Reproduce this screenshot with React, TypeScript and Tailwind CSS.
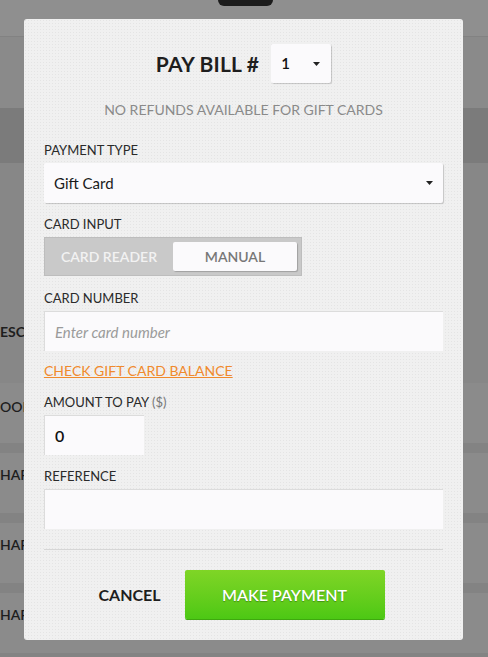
import { useState } from 'react';

const font = { fontFamily: '"Source Sans Pro", Lato, "Open Sans", sans-serif' };

// Dimmed page behind the modal
const Backdrop = () => (
  <div className="w-full h-[657px] flex flex-col bg-[#878787] text-[#1e1e1e] font-semibold text-[14px]">
    <div className="h-[37px] bg-[#8f8f8f] border-b border-[#828282] flex justify-center">
      <div className="w-[55px] h-[6px] bg-[#1c1c1c] rounded-b-[6px] ml-[3px]" />
    </div>
    <div className="h-[71px] bg-[#8a8a8a]" />
    <div className="h-[55px] bg-[#7b7b7b]" />
    <div className="h-[220px] bg-[#878787] flex items-end pb-[41px]">
      <span className="font-bold">ESC</span>
    </div>
    <div className="h-[60px] bg-[#8b8b8b] flex items-center pb-[14px]">
      <span>OOM</span>
    </div>
    {[0, 1, 2].map((i) => (
      <div key={i} className="flex flex-col">
        <div className="h-[10px] bg-[#838383]" />
        <div className="h-[60px] bg-[#8b8b8b] flex items-center pb-[18px]">
          <span>HAR</span>
        </div>
      </div>
    ))}
    <div className="flex-1 bg-[#838383]" />
  </div>
);

const Label = ({ children, className = '' }: { children: React.ReactNode; className?: string }) => (
  <div className={`text-[13px] leading-[18px] text-[#2a2a2a] ${className}`}>{children}</div>
);

const Caret = () => (
  <svg width="7" height="4" viewBox="0 0 7 4" className="fill-[#222]">
    <path d="M0 0h7L3.5 4z" />
  </svg>
);

export default function App() {
  const [mode, setMode] = useState<'reader' | 'manual'>('manual');

  return (
    <div className="relative w-full h-[657px] overflow-hidden" style={font}>
      <Backdrop />

      {/* Modal */}
      <div className="absolute left-[24px] top-[19px] w-[439px] h-[621px] rounded-[3px] bg-[#f0f0f0] bg-[radial-gradient(#e4e4e4_0.6px,transparent_0.7px)] bg-[length:3px_3px] px-5 pt-[25px] flex flex-col">
        {/* Title */}
        <div className="flex items-center justify-center gap-3">
          <h1 className="text-[21px] font-bold text-[#1e1e1e] tracking-[0.2px]">PAY BILL #</h1>
          <div className="w-[60px] h-[39px] bg-[#fbfafc] rounded-[2px] shadow-[1px_1px_1px_rgba(0,0,0,0.18)] flex items-center justify-between pl-[10px] pr-[11px]">
            <span className="text-[15px] font-semibold text-[#111]">1</span>
            <Caret />
          </div>
        </div>

        <p className="mt-[17px] text-center text-[14px] leading-[20px] text-[#8a8a8a]">
          NO REFUNDS AVAILABLE FOR GIFT CARDS
        </p>

        <Label className="mt-[21px]">PAYMENT TYPE</Label>
        <div className="mt-[4px] h-[40px] bg-[#fbfafc] rounded-[2px] shadow-[1px_1px_1px_rgba(0,0,0,0.18)] flex items-center justify-between pl-[10px] pr-[10px]">
          <span className="text-[15px] text-[#1a1a1a]">Gift Card</span>
          <Caret />
        </div>

        <Label className="mt-[12px]">CARD INPUT</Label>
        <div className="mt-[4px] w-[258px] h-[39px] bg-[#c9c9c9] border border-[#bdbdbd] flex items-center p-[4px] gap-[4px]">
          <button
            onClick={() => setMode('reader')}
            className={`flex-1 h-full text-[14px] font-semibold ${mode === 'reader' ? 'bg-[#fbfafc] text-[#777] rounded-[2px] shadow-[1px_1px_1px_rgba(0,0,0,0.2)]' : 'text-[#f2f2f2]'}`}
          >
            CARD READER
          </button>
          <button
            onClick={() => setMode('manual')}
            className={`w-[124px] h-full text-[14px] font-semibold ${mode === 'manual' ? 'bg-[#fbfafc] text-[#777] rounded-[2px] shadow-[1px_1px_1px_rgba(0,0,0,0.2)]' : 'text-[#f2f2f2]'}`}
          >
            MANUAL
          </button>
        </div>

        <Label className="mt-[13px]">CARD NUMBER</Label>
        <input
          placeholder="Enter card number"
          className="mt-[4px] h-[40px] bg-[#fbfafc] border-t border-l border-[#dcdcdc] px-[10px] text-[15px] italic placeholder:text-[#9a9a9a] outline-none"
        />

        <a href="#" className="mt-[10px] text-[14px] leading-[20px] text-[#f08a2c] underline self-start">
          CHECK GIFT CARD BALANCE
        </a>

        <Label className="mt-[12px]">
          AMOUNT TO PAY <span className="text-[#777]">($)</span>
        </Label>
        <input
          defaultValue="0"
          className="mt-[4px] w-[100px] h-[40px] bg-[#fbfafc] border-t border-l border-[#dcdcdc] px-[10px] text-[16px] font-semibold text-[#111] outline-none"
        />

        <Label className="mt-[12px]">REFERENCE</Label>
        <input className="mt-[4px] h-[40px] bg-[#fbfafc] border-t border-l border-[#dcdcdc] px-[10px] outline-none" />

        <div className="mt-[20px] h-px bg-[#d6d6d6]" />

        <div className="mt-[20px] flex items-center justify-center gap-[24px] pr-[4px]">
          <button className="text-[16px] font-bold text-[#1e1e1e]">CANCEL</button>
          <button className="w-[200px] h-[49px] rounded-[2px] bg-gradient-to-b from-[#7fd526] to-[#4cc814] text-white text-[16px] font-semibold [text-shadow:0_1px_1px_rgba(0,0,0,0.3)] shadow-[0_1px_0_#3fa80f]">
            MAKE PAYMENT
          </button>
        </div>
      </div>
    </div>
  );
}
